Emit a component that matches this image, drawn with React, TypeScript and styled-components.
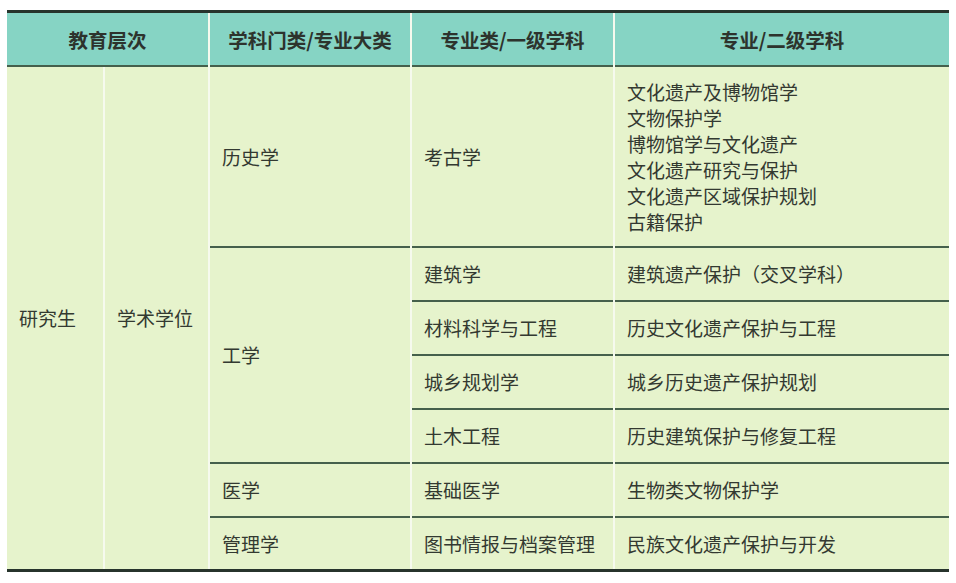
import styled, { createGlobalStyle } from 'styled-components';

const GlobalStyle = createGlobalStyle`
  html, body {
    margin: 0;
    padding: 0;
    background: #ffffff;
  }
  body {
    font-family: 'Noto Sans CJK SC', 'Noto Sans', sans-serif;
  }
`;

const Page = styled.div`
  width: 956px;
  height: 583px;
  padding: 10px 7px 0 7px;
  box-sizing: border-box;
`;

const Table = styled.div`
  display: grid;
  grid-template-columns: 96px 103px 200px 201px 334px;
  grid-template-rows: 54px 181px repeat(5, 54px);
  column-gap: 2px;
  background: #f6faee;
  border-top: 3px solid #27342c;
  border-bottom: 3px solid #27342c;
  width: 942px;
  height: 562px;
  box-sizing: border-box;
`;

const HeadCell = styled.div<{ $span?: string }>`
  grid-column: ${(p) => p.$span || 'auto'};
  background: #86d4c4;
  border-bottom: 2px solid #45604c;
  display: flex;
  align-items: center;
  justify-content: center;
  font-size: 19.5px;
  font-weight: 700;
  color: #2d332d;
  box-sizing: border-box;
`;

const Cell = styled.div<{ $col: number; $row: string; $last?: boolean }>`
  grid-column: ${(p) => p.$col};
  grid-row: ${(p) => p.$row};
  background: #e6f3cc;
  border-bottom: ${(p) => (p.$last ? 'none' : '2px solid #45604c')};
  display: flex;
  flex-direction: column;
  justify-content: center;
  padding-left: 12px;
  font-size: 19px;
  line-height: 26px;
  color: #333931;
  box-sizing: border-box;
`;

const rows = [
  { cat: '历史学', catRow: '2', first: '考古学', row: 2, items: ['文化遗产及博物馆学', '文物保护学', '博物馆学与文化遗产', '文化遗产研究与保护', '文化遗产区域保护规划', '古籍保护'] },
  { cat: '工学', catRow: '3 / 7', first: '建筑学', row: 3, items: ['建筑遗产保护（交叉学科）'] },
  { first: '材料科学与工程', row: 4, items: ['历史文化遗产保护与工程'] },
  { first: '城乡规划学', row: 5, items: ['城乡历史遗产保护规划'] },
  { first: '土木工程', row: 6, items: ['历史建筑保护与修复工程'] },
  { cat: '医学', catRow: '7', first: '基础医学', row: 7, items: ['生物类文物保护学'] },
  { cat: '管理学', catRow: '8', first: '图书情报与档案管理', row: 8, items: ['民族文化遗产保护与开发'] },
];

export default function App() {
  return (
    <>
      <GlobalStyle />
      <Page>
        <Table>
          <HeadCell $span="1 / 3">教育层次</HeadCell>
          <HeadCell>学科门类/专业大类</HeadCell>
          <HeadCell>专业类/一级学科</HeadCell>
          <HeadCell>专业/二级学科</HeadCell>

          <Cell $col={1} $row="2 / 9" $last>研究生</Cell>
          <Cell $col={2} $row="2 / 9" $last>学术学位</Cell>

          {rows.map((r) => (
            <>
              {r.cat && (
                <Cell key={r.cat} $col={3} $row={r.catRow!} $last={r.row === 8}>
                  {r.cat}
                </Cell>
              )}
              <Cell key={r.first} $col={4} $row={String(r.row)} $last={r.row === 8}>
                {r.first}
              </Cell>
              <Cell key={r.first + '-sub'} $col={5} $row={String(r.row)} $last={r.row === 8}>
                {r.items.map((t) => (
                  <span key={t}>{t}</span>
                ))}
              </Cell>
            </>
          ))}
        </Table>
      </Page>
    </>
  );
}
